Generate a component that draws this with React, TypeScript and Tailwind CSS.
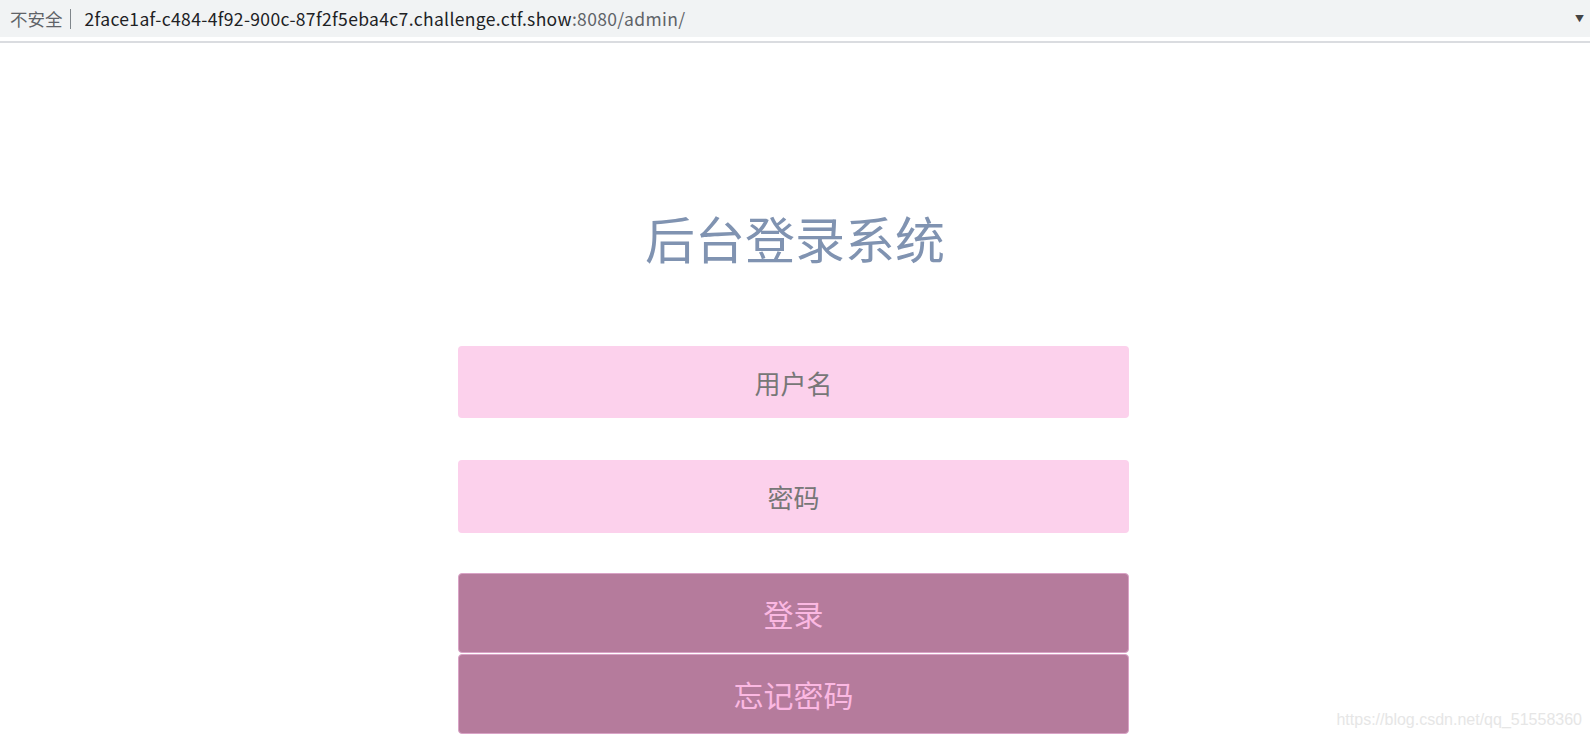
import React from "react";

export default function App() {
  const cjk = { fontFamily: '"Noto Sans CJK SC", "Noto Sans", sans-serif' };
  return (
    <div className="relative w-[1590px] h-[746px] bg-white overflow-hidden" style={cjk}>
      {/* address bar */}
      <div className="h-[37px] bg-[#f1f3f4] flex items-center pl-[10px] pr-[6px] text-[17.5px] leading-none">
        <span className="text-[#5f6368]">不安全</span>
        <span className="ml-[7px] mr-[14px] w-[1px] h-[20px] bg-[#80868b]" />
        <span className="text-[#202124] tracking-[0.35px]">2face1af-c484-4f92-900c-87f2f5eba4c7.challenge.ctf.show</span>
        <span className="text-[#5f6368] tracking-[0.35px]">:8080/admin/</span>
        <span className="ml-auto text-[9px] text-[#444] leading-none">▼</span>
      </div>
      <div className="h-[4px] bg-white" />
      <div className="h-[2px] bg-[#dadce0]" />

      {/* main */}
      <div className="flex flex-col">
        <h1 className="self-center mt-[162px] text-[50px] leading-[64px] text-[#8093b1] font-normal">后台登录系统</h1>
        <div className="w-[671px] ml-[458px] mt-[77px] flex flex-col">
          <div className="h-[72px] rounded-[4px] bg-[#fcd1ec] flex items-center justify-center text-[26px] text-[#777777]">
            用户名
          </div>
          <div className="h-[73px] mt-[42px] rounded-[4px] bg-[#fcd1ec] flex items-center justify-center text-[26px] text-[#777777]">
            密码
          </div>
          <div className="h-[80px] mt-[40px] rounded-[4px] bg-[#b57b9c] border border-[#d9a3c6] flex items-center justify-center text-[30px] text-[#fbb8e2]">
            登录
          </div>
          <div className="h-[80px] mt-[1px] rounded-[4px] bg-[#b57b9c] border border-[#d9a3c6] flex items-center justify-center text-[30px] text-[#fbb8e2]">
            忘记密码
          </div>
        </div>
      </div>

      {/* watermark */}
      <div
        className="absolute right-[8px] bottom-[18px] text-[16px] leading-none text-[#e6e6e6]"
        style={{ fontFamily: '"Liberation Sans", Arial, sans-serif' }}
      >
        https://blog.csdn.net/qq_51558360
      </div>
    </div>
  );
}
